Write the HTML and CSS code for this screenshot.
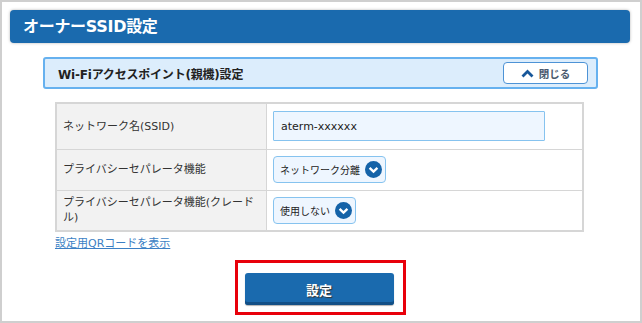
FILE: index.html
```html
<!DOCTYPE html>
<html lang="ja">
<head>
  <meta charset="UTF-8" />
  <title>オーナーSSID設定</title>
  <link rel="stylesheet" href="styles.css">
</head>
<body>
  <div class="frame">
    <h1 class="title-bar">オーナーSSID設定</h1>

    <section class="panel">
      <div class="panel-head">
        <h2>Wi-Fiアクセスポイント(親機)設定</h2>
        <button class="close-btn" type="button">
          <svg width="13" height="9" viewBox="0 0 13 9"><path d="M1.5 7.5 L6.5 2.5 L11.5 7.5" fill="none" stroke="#17579a" stroke-width="2.8"/></svg>
          閉じる
        </button>
      </div>

      <table class="settings">
        <tr class="row-ssid">
          <th>ネットワーク名(SSID)</th>
          <td><input class="text-input" type="text" value="aterm-xxxxxx"></td>
        </tr>
        <tr class="row-sep">
          <th>プライバシーセパレータ機能</th>
          <td>
            <span class="select">ネットワーク分離
              <svg class="chev" width="17" height="17" viewBox="0 0 17 17"><circle cx="8.5" cy="8.5" r="8.5" fill="#1563a8"/><path d="M4.6 6.8 L8.5 10.6 L12.4 6.8" fill="none" stroke="#fff" stroke-width="2.4"/></svg>
            </span>
          </td>
        </tr>
        <tr class="row-sep">
          <th>プライバシーセパレータ機能(クレードル)</th>
          <td>
            <span class="select">使用しない
              <svg class="chev" width="17" height="17" viewBox="0 0 17 17"><circle cx="8.5" cy="8.5" r="8.5" fill="#1563a8"/><path d="M4.6 6.8 L8.5 10.6 L12.4 6.8" fill="none" stroke="#fff" stroke-width="2.4"/></svg>
            </span>
          </td>
        </tr>
      </table>
      <a class="qr-link" href="#">設定用QRコードを表示</a>
    </section>

    <div class="actions">
      <div class="highlight">
        <button class="submit" type="button">設定</button>
      </div>
    </div>
  </div>
</body>
</html>
```

FILE: styles.css
```css
body {
  margin: 0;
  font-family: "DejaVu Sans", "Noto Sans CJK JP", sans-serif;
  color: #333;
  background: #fff;
}
.frame {
  width: 642px;
  height: 323px;
  box-sizing: border-box;
  border: 2px solid #cfcfcf;
  padding: 8px 10px 0 8px;
}
.title-bar {
  margin: 0;
  height: 33px;
  line-height: 33px;
  padding-left: 13px;
  background-color: #1a6aae;
  border-radius: 4px;
  box-shadow: 0 0 3px rgba(0,0,0,0.3);
  color: #fff;
  font-size: 16px;
  font-weight: bold;
  letter-spacing: -0.3px;
}
.panel {
  margin: 14px 0 0 33px;
  width: 555px;
}
.panel-head {
  display: flex;
  align-items: center;
  justify-content: space-between;
  height: 32px;
  box-sizing: border-box;
  padding: 0 8px 0 13px;
  background-color: #dcedfc;
  border: 2px solid #66b1ef;
  border-radius: 3px;
}
.panel-head h2 {
  margin: 0;
  font-size: 12px;
  font-weight: bold;
  color: #222;
  letter-spacing: -0.2px;
}
.close-btn {
  display: flex;
  align-items: center;
  justify-content: center;
  gap: 5px;
  width: 85px;
  height: 22px;
  padding: 0;
  background: #fff;
  border: 1px solid #4d93d6;
  border-radius: 4px;
  font-family: "Noto Sans CJK JP", sans-serif;
  font-size: 10.5px;
  font-weight: bold;
  color: #4a5a6e;
}
.settings {
  margin: 13px 0 0 12px;
  width: 529px;
  border-collapse: collapse;
  border: 2px solid #d6d6d6;
  font-size: 11px;
}
.settings th,
.settings td {
  border: 1px solid #d6d6d6;
  text-align: left;
}
.settings th {
  width: 197px;
  padding: 0 6px;
  background-color: #f2f2f2;
  font-weight: normal;
  color: #333;
  line-height: 15px;
}
.settings td {
  padding: 0 6px;
}
.row-ssid {
  height: 46px;
}
.row-sep {
  height: 41px;
}
.text-input {
  display: block;
  width: 272px;
  height: 30px;
  box-sizing: border-box;
  padding: 0 7px;
  background-color: #eef6ff;
  border: 1px solid #86c3ef;
  border-radius: 1px;
  font-family: "DejaVu Sans", sans-serif;
  font-size: 11px;
  color: #222;
}
.select {
  display: inline-flex;
  align-items: center;
  gap: 5px;
  height: 27px;
  box-sizing: border-box;
  padding: 0 3px 0 6px;
  background-color: #eef6ff;
  border: 1px solid #86c3ef;
  border-radius: 4px;
  font-size: 10px;
  color: #222;
}
.qr-link {
  display: inline-block;
  margin: 0 0 0 12px;
  font-size: 11px;
  color: #3b7fc4;
  text-decoration: underline;
}
.actions {
  display: flex;
  justify-content: center;
  margin-top: 9px;
}
.highlight {
  padding: 10px 9px 7px 7px;
  border: 3px solid #e8000b;
}
.submit {
  display: block;
  width: 149px;
  height: 32px;
  background: #1a6aae;
  border: none;
  border-radius: 3px;
  box-shadow: inset 0 -3px 0 #124f86, 0 1px 1px rgba(0,0,0,0.3);
  color: #fff;
  font-family: "Noto Sans CJK JP", sans-serif;
  font-size: 13px;
  font-weight: bold;
  text-shadow: 1px 1px 1px #333;
}
```
